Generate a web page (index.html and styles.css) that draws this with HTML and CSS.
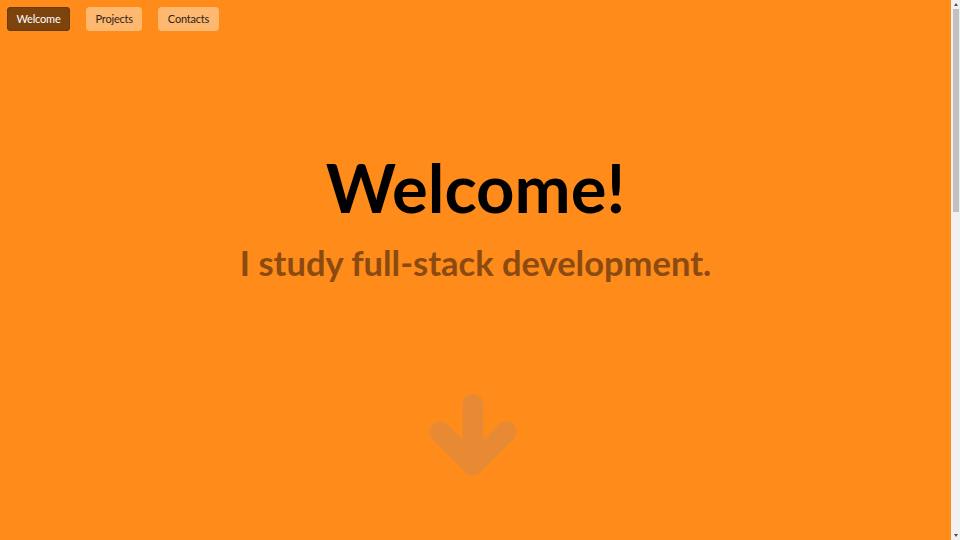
FILE: index.html
```html
<!DOCTYPE html>
<html lang="en">
<head>
<meta charset="utf-8">
<title>Welcome</title>
<link rel="stylesheet" href="styles.css">
</head>
<body>
<div class="page">
<nav class="nav">
  <a class="nav-btn active" href="#welcome">Welcome</a>
  <a class="nav-btn" href="#projects">Projects</a>
  <a class="nav-btn" href="#contacts">Contacts</a>
</nav>
<section class="hero" id="welcome">
  <h1 class="title">Welcome!</h1>
  <h2 class="subtitle">I study full-stack development.</h2>
  <svg class="arrow" viewBox="0 0 88 84" width="88" height="84" aria-hidden="true">
    <path d="M44 11.5 V70 M11 39 L44 72 L77 39" fill="none" stroke="#e88a33" stroke-width="21" stroke-linecap="round" stroke-linejoin="round"/>
  </svg>
</section>
<section class="section" id="projects"></section>
<section class="section" id="contacts"></section>
</div>
<div class="scrollbar" aria-hidden="true">
  <div class="sb-btn sb-up"></div>
  <div class="sb-thumb"></div>
  <div class="sb-track"></div>
  <div class="sb-btn sb-down"></div>
</div>
</body>
</html>
```
FILE: styles.css
```css
html, body {
  margin: 0;
  height: 100%;
  background: #ff8c1a;
}
body {
  display: flex;
  font-family: "Lato", "Open Sans", sans-serif;
  overflow: hidden;
}
.page {
  flex: 1;
  min-width: 0;
  height: 100vh;
  overflow: hidden;
}
.scrollbar {
  width: 9px;
  height: 100vh;
  display: flex;
  flex-direction: column;
  background: #f1f1f1;
}
.sb-btn {
  height: 9px;
  display: flex;
  align-items: center;
  justify-content: center;
}
.sb-up::before,
.sb-down::before {
  content: "";
  width: 0;
  height: 0;
  border-left: 2.5px solid transparent;
  border-right: 2.5px solid transparent;
}
.sb-up::before {
  border-bottom: 3px solid #505050;
}
.sb-down::before {
  border-top: 3px solid #505050;
}
.sb-thumb {
  height: 203px;
  margin: 0 1px 0 2px;
  background: #c1c1c1;
}
.sb-track {
  flex: 1;
}
.nav {
  display: flex;
  gap: 16px;
  padding: 7px;
  height: 24px;
}
.nav-btn {
  display: flex;
  align-items: center;
  justify-content: center;
  height: 24px;
  padding: 0 9.5px 1px;
  border-radius: 4px;
  background: #ffb870;
  color: #2e2418;
  font-size: 11px;
  letter-spacing: -0.2px;
  text-decoration: none;
  box-sizing: border-box;
}
.nav-btn.active {
  background: #7c430d;
  color: #fff;
  box-shadow: 0 0 0 1px #6a3a0c inset;
}
.hero {
  display: flex;
  flex-direction: column;
  align-items: center;
  padding-top: 115px;
  height: 388px;
}
.title {
  margin: 0;
  font-size: 67px;
  line-height: 68px;
  font-weight: 700;
  color: #000;
}
.subtitle {
  margin: 24px 0 0;
  font-size: 34.5px;
  line-height: 36px;
  font-weight: 700;
  color: #8b4a10;
}
.arrow {
  margin-top: 112px;
  margin-right: 6px;
  display: block;
}
.section {
  height: 430px;
}
```
